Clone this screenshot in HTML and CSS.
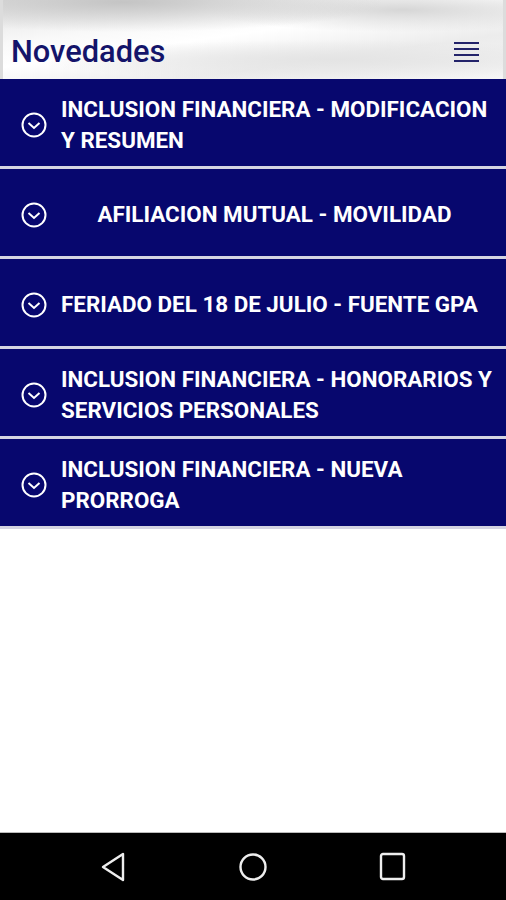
FILE: index.html
```html
<!DOCTYPE html>
<html lang="es">
<head>
    <meta charset="UTF-8">
    <meta name="viewport" content="width=device-width, initial-scale=1.0">
    <title>Novedades</title>
    <link rel="stylesheet" href="styles.css">
</head>
<body>

<div class="app">
    <div class="header">
        <h1>Novedades</h1>
        <div class="menu-icon">
            <span></span><span></span><span></span><span></span>
        </div>
    </div>

    <div class="news-list">
        <div class="news-item">
            <svg class="chevron" viewBox="0 0 26 26"><circle cx="13" cy="13" r="11.5"/><polyline points="7.5,11 13,16 18.5,11"/></svg>
            <p>INCLUSION FINANCIERA - MODIFICACION Y RESUMEN</p>
        </div>
        <div class="news-item">
            <svg class="chevron" viewBox="0 0 26 26"><circle cx="13" cy="13" r="11.5"/><polyline points="7.5,11 13,16 18.5,11"/></svg>
            <p class="centered">AFILIACION MUTUAL - MOVILIDAD</p>
        </div>
        <div class="news-item">
            <svg class="chevron" viewBox="0 0 26 26"><circle cx="13" cy="13" r="11.5"/><polyline points="7.5,11 13,16 18.5,11"/></svg>
            <p>FERIADO DEL 18 DE JULIO - FUENTE GPA</p>
        </div>
        <div class="news-item">
            <svg class="chevron" viewBox="0 0 26 26"><circle cx="13" cy="13" r="11.5"/><polyline points="7.5,11 13,16 18.5,11"/></svg>
            <p>INCLUSION FINANCIERA - HONORARIOS Y SERVICIOS PERSONALES</p>
        </div>
        <div class="news-item">
            <svg class="chevron" viewBox="0 0 26 26"><circle cx="13" cy="13" r="11.5"/><polyline points="7.5,11 13,16 18.5,11"/></svg>
            <p>INCLUSION FINANCIERA - NUEVA PRORROGA</p>
        </div>
    </div>

    <div class="nav-bar">
        <svg class="nav-icon" viewBox="0 0 30 30"><polygon points="25,2 25,28 5,15"/></svg>
        <svg class="nav-icon" viewBox="0 0 30 30"><circle cx="15" cy="15" r="12.5"/></svg>
        <svg class="nav-icon" viewBox="0 0 30 30"><rect x="3" y="2" width="23" height="25" rx="2"/></svg>
    </div>
</div>

</body>
</html>
```

FILE: styles.css
```css
body {
    margin: 0;
    background: #ffffff;
    font-family: Roboto, "Liberation Sans", sans-serif;
}
.app {
    display: flex;
    flex-direction: column;
    height: 900px;
    width: 506px;
}
.header {
    height: 79px;
    box-sizing: border-box;
    display: flex;
    align-items: flex-end;
    justify-content: space-between;
    padding: 0 24px 9px 8px;
    border-left: 3px solid #dcdcdc;
    border-right: 3px solid #dcdcdc;
    background:
        radial-gradient(ellipse 260px 30px at 120px 2px, #c4c4c4, rgba(220,220,220,0) 100%),
        radial-gradient(ellipse 200px 22px at 400px 10px, #d6d6d6, rgba(230,230,230,0) 100%),
        radial-gradient(ellipse 300px 20px at 330px 60px, #e4e4e4, rgba(240,240,240,0) 100%),
        linear-gradient(172deg, #e2e2e2 0%, #f9f9f9 30%, #ffffff 45%, #ececec 70%, #f6f6f6 100%);
}
.header h1 {
    margin: 0;
    font-size: 30.8px;
    font-weight: 500;
    color: #14146a;
}
.menu-icon {
    display: flex;
    flex-direction: column;
    gap: 4px;
    margin-bottom: 8px;
}
.menu-icon span {
    display: block;
    width: 25px;
    height: 2px;
    background: #23236a;
}
.news-list {
    display: flex;
    flex-direction: column;
    flex: 1;
}
.news-item {
    box-sizing: border-box;
    height: 90px;
    display: flex;
    align-items: center;
    background-color: #07076e;
    border-bottom: 3px solid #d4d4e2;
    color: white;
    padding: 4px 0 0 21px;
}
.chevron {
    width: 26px;
    height: 26px;
    flex-shrink: 0;
    fill: none;
    stroke: white;
    stroke-width: 2;
}
.news-item p {
    box-sizing: border-box;
    margin: 0 0 0 14px;
    width: 438px;
    font-size: 22.4px;
    font-weight: bold;
    line-height: 31px;
}
.news-item p.centered {
    text-align: center;
    padding-right: 11px;
}
.nav-bar {
    height: 67px;
    background: #000000;
    border-top: 1px solid #bbbbbb;
    display: flex;
    align-items: center;
    justify-content: center;
    gap: 110px;
}
.nav-icon {
    width: 30px;
    height: 30px;
    fill: none;
    stroke: #eeeeee;
    stroke-width: 2.4;
    stroke-linejoin: round;
}
```
